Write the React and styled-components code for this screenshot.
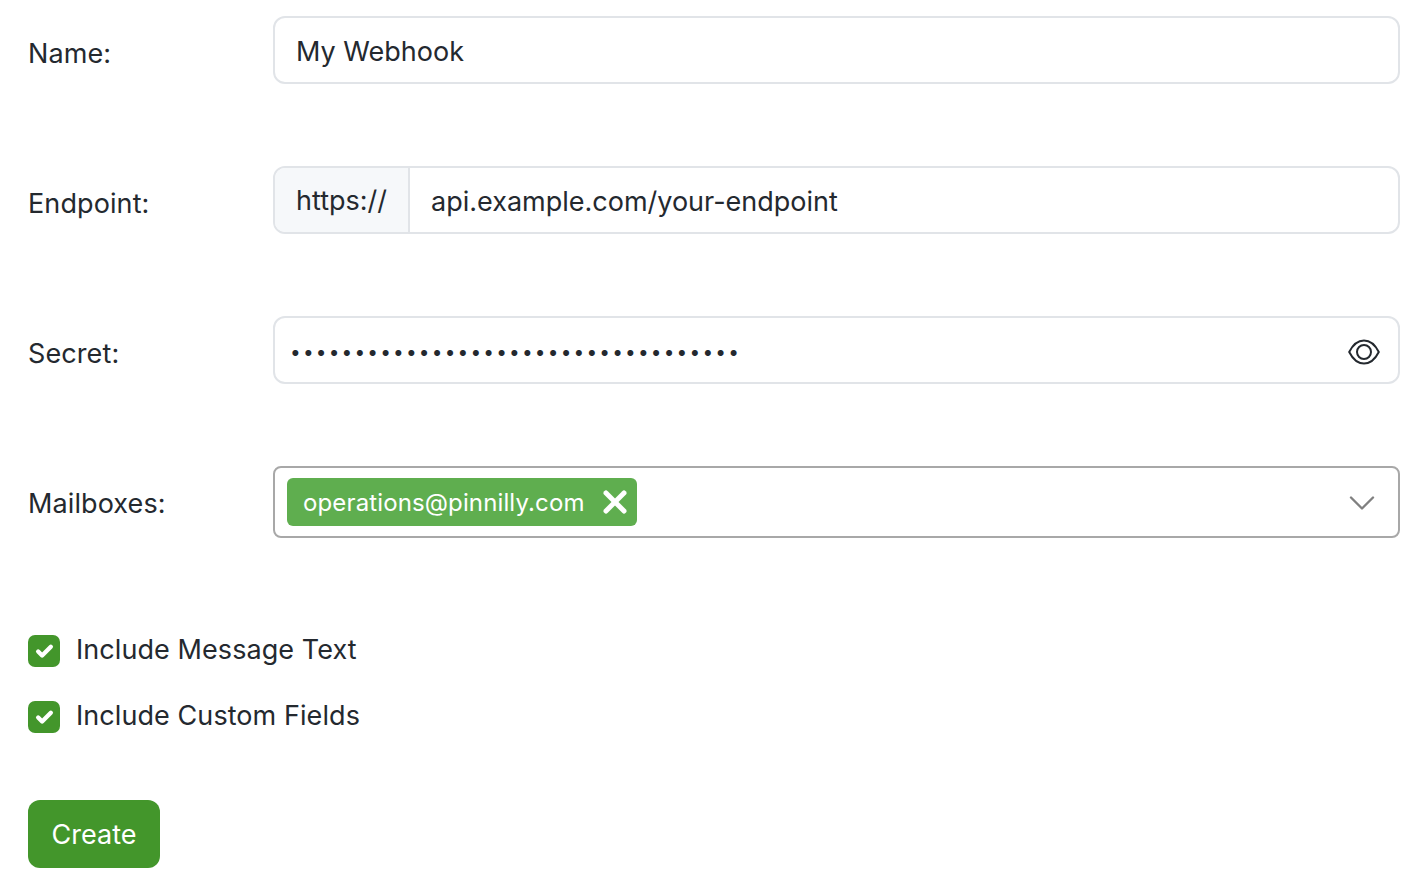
import React from "react"
import styled, { createGlobalStyle } from "styled-components"
import { ChevronDown, X, Check } from "lucide-react"

const secret = "a".repeat(35)

export default function App() {
  return (
    <>
      <GlobalStyle />
      <Form>
        <Row>
          <Label>Name:</Label>
          <InputBox>
            <TextInput readOnly value="My Webhook" />
          </InputBox>
        </Row>
        <Row>
          <Label>Endpoint:</Label>
          <InputBox>
            <Prefix>https://</Prefix>
            <TextInput readOnly value="api.example.com/your-endpoint" />
          </InputBox>
        </Row>
        <Row>
          <Label>Secret:</Label>
          <InputBox>
            <SecretInput readOnly type="password" value={secret} />
            <EyeButton>
              <svg width="32" height="26" viewBox="0 0 32 26" fill="none" stroke="currentColor" strokeWidth="2">
                <path d="M1.2 13C5 5.5 10 1.5 16 1.5S27 5.5 30.8 13C27 20.5 22 24.5 16 24.5S5 20.5 1.2 13Z" strokeLinejoin="round" />
                <circle cx="16" cy="13" r="7" />
              </svg>
            </EyeButton>
          </InputBox>
        </Row>
        <Row>
          <Label>Mailboxes:</Label>
          <SelectBox>
            <Tag>
              operations@pinnilly.com
              <X size={36} strokeWidth={3.3} />
            </Tag>
            <Chevron>
              <ChevronDown size={44} strokeWidth={1.3} />
            </Chevron>
          </SelectBox>
        </Row>
        <Checks>
          <CheckRow>
            <Box>
              <Check size={19} strokeWidth={5.5} />
            </Box>
            <CheckText>Include Message Text</CheckText>
          </CheckRow>
          <CheckRow>
            <Box>
              <Check size={19} strokeWidth={5.5} />
            </Box>
            <CheckText>Include Custom Fields</CheckText>
          </CheckRow>
        </Checks>
        <Button>Create</Button>
      </Form>
    </>
  )
}

const GlobalStyle = createGlobalStyle`
  html, body {
    margin: 0;
    background: #fff;
  }
  body {
    font-family: Inter, "Liberation Sans", sans-serif;
    color: #24292f;
  }
`

const Form = styled.form`
  display: flex;
  flex-direction: column;
  padding: 16px 18px 0 28px;
`

const Row = styled.div`
  display: flex;
  align-items: flex-start;
  margin-bottom: 82px;
  &:nth-child(4) {
    margin-bottom: 97px;
  }
`

const Label = styled.label`
  width: 245px;
  flex-shrink: 0;
  font-size: 27px;
  line-height: 34px;
  letter-spacing: 0.1px;
  padding-top: 21px;
`

const InputBox = styled.div`
  flex: 1;
  display: flex;
  align-items: center;
  height: 68px;
  box-sizing: border-box;
  border: 2px solid #e1e4e8;
  border-radius: 12px;
  overflow: hidden;
`

const TextInput = styled.input`
  flex: 1;
  min-width: 0;
  height: 100%;
  box-sizing: border-box;
  padding: 2px 21px 0;
  border: 0;
  outline: 0;
  background: transparent;
  font: 27px Inter, sans-serif;
  color: #24292f;
`

const Prefix = styled.span`
  display: flex;
  align-items: center;
  height: 100%;
  box-sizing: border-box;
  padding: 0 21px;
  background: #f6f8fa;
  border-right: 2px solid #e1e4e8;
  font-size: 27px;
`

const SecretInput = styled(TextInput)`
  padding: 5px 15px 0;
  font-size: 19px;
  letter-spacing: 2.2px;
`

const EyeButton = styled.span`
  display: flex;
  margin: 3px 18px 0 0;
  color: #24292f;
`

const SelectBox = styled.div`
  flex: 1;
  display: flex;
  align-items: center;
  justify-content: space-between;
  height: 72px;
  box-sizing: border-box;
  padding: 0 14px 0 12px;
  border: 2px solid #a8a8a8;
  border-radius: 8px;
`

const Tag = styled.span`
  display: flex;
  align-items: center;
  gap: 12px;
  height: 48px;
  padding: 0 4px 0 16px;
  border-radius: 6px;
  background: #5fae4f;
  color: #fff;
  font-size: 24px;
  letter-spacing: 0.13px;
`

const Chevron = styled.span`
  display: flex;
  margin-top: 2px;
  color: #808080;
`

const Checks = styled.div`
  display: flex;
  flex-direction: column;
  gap: 34px;
  margin-bottom: 67px;
`

const CheckRow = styled.label`
  display: flex;
  align-items: center;
  gap: 16px;
  height: 32px;
`

const CheckText = styled.span`
  font-size: 27px;
  letter-spacing: 0.07px;
  margin-top: -3px;
`

const Box = styled.span`
  display: flex;
  align-items: center;
  justify-content: center;
  width: 32px;
  height: 32px;
  border-radius: 7px;
  background: #43962b;
  color: #fff;
`

const Button = styled.button`
  align-self: flex-start;
  width: 132px;
  height: 68px;
  border: 0;
  border-radius: 12px;
  background: #43962b;
  color: #fff;
  font: 27px Inter, sans-serif;
`
